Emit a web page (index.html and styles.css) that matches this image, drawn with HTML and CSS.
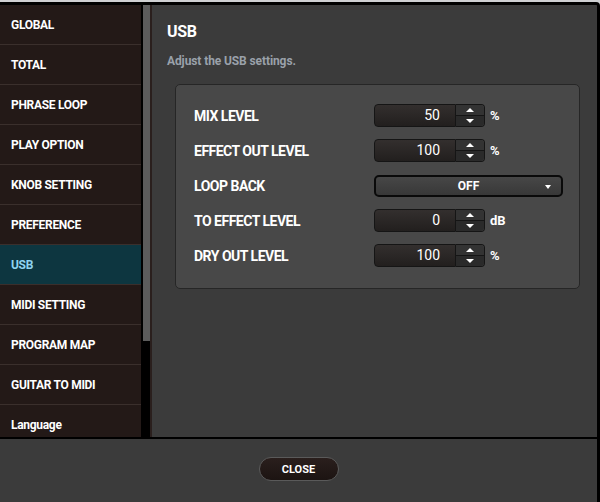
FILE: index.html
```html
<!DOCTYPE html>
<html lang="en">
<head>
  <meta charset="UTF-8">
  <title>USB settings</title>
  <link rel="stylesheet" href="styles.css">
</head>
<body>
  <div class="dialog">
    <div class="content">
      <ul class="menu">
        <li>GLOBAL</li>
        <li>TOTAL</li>
        <li>PHRASE LOOP</li>
        <li>PLAY OPTION</li>
        <li>KNOB SETTING</li>
        <li>PREFERENCE</li>
        <li class="active">USB</li>
        <li>MIDI SETTING</li>
        <li>PROGRAM MAP</li>
        <li>GUITAR TO MIDI</li>
        <li>Language</li>
      </ul>
      <div class="scrollbar"><div class="thumb"></div></div>
      <div class="main">
        <h2>USB</h2>
        <p class="desc">Adjust the USB settings.</p>
        <div class="box">
          <div class="row">
            <span class="label">MIX LEVEL</span>
            <div class="num"><span class="val">50</span><span class="spin"><i class="up"></i><i class="down"></i></span></div>
            <span class="unit">%</span>
          </div>
          <div class="row">
            <span class="label">EFFECT OUT LEVEL</span>
            <div class="num"><span class="val">100</span><span class="spin"><i class="up"></i><i class="down"></i></span></div>
            <span class="unit">%</span>
          </div>
          <div class="row">
            <span class="label">LOOP BACK</span>
            <div class="select">OFF<i class="caret"></i></div>
          </div>
          <div class="row">
            <span class="label">TO EFFECT LEVEL</span>
            <div class="num"><span class="val">0</span><span class="spin"><i class="up"></i><i class="down"></i></span></div>
            <span class="unit">dB</span>
          </div>
          <div class="row">
            <span class="label">DRY OUT LEVEL</span>
            <div class="num"><span class="val">100</span><span class="spin"><i class="up"></i><i class="down"></i></span></div>
            <span class="unit">%</span>
          </div>
        </div>
      </div>
    </div>
    <div class="footer">
      <button class="btn-close">CLOSE</button>
    </div>
  </div>
</body>
</html>
```
FILE: styles.css
```css
body{
  margin: 0;
  background: #cfd0d2;
  font-family: Roboto, "Liberation Sans", sans-serif;
  color: #fff;
}
.dialog{
  margin-top: 2px;
  height: 497px;
  border-top: 3px solid #000;
  border-right: 3px solid #000;
  border-top-right-radius: 4px;
  background: #3b3b3b;
  display: flex;
  flex-direction: column;
}
.content{
  display: flex;
  height: 432px;
  overflow: hidden;
}

.menu{
  width: 141px;
  margin: 0;
  padding: 0;
  list-style: none;
  background: #231917;
  flex-shrink: 0;
}
.menu > li{
  height: 39px;
  line-height: 41px;
  padding-left: 11px;
  border-bottom: 1px solid #3a2f2c;
  font-size: 12px;
  font-weight: 700;
  letter-spacing: -0.3px;
}
.menu > li.active{
  background: #0d3640;
  color: #8fd3ef;
}

.scrollbar{
  width: 11px;
  padding-left: 2px;
  box-sizing: border-box;
  background: #000;
  border-right: 2px solid #2a1f1d;
  flex-shrink: 0;
}
.scrollbar .thumb{
  height: 336px;
  background: #5c5c5c;
}

.main{
  flex: 1;
  padding: 0 17px 0 23px;
}
.main h2{
  margin: 17px 0 0 -8px;
  font-size: 16px;
  font-weight: 700;
  letter-spacing: -0.3px;
}
.main .desc{
  margin: 13px 0 0 -8px;
  font-size: 12px;
  font-weight: 700;
  color: #9aa1aa;
  letter-spacing: -0.1px;
}

.box{
  margin-top: 16px;
  padding: 13px 0 15px 18px;
  background: #484848;
  border: 1px solid #262626;
  border-radius: 5px;
}
.row{
  display: flex;
  align-items: center;
  height: 35px;
}
.row .label{
  width: 180px;
  font-size: 14px;
  font-weight: 700;
  letter-spacing: -0.5px;
}
.row .unit{
  margin-left: 5px;
  font-size: 13px;
  font-weight: 700;
}

.num{
  display: flex;
  height: 23px;
}
.num .val{
  width: 65px;
  padding-right: 15px;
  text-align: right;
  line-height: 21px;
  font-size: 14px;
  background: linear-gradient(#332f2e, #221f1e);
  border: 1px solid #151515;
  border-radius: 4px 0 0 4px;
}
.num .spin{
  width: 28px;
  display: flex;
  flex-direction: column;
  border: 1px solid #151515;
  border-left: none;
  border-radius: 0 4px 4px 0;
  overflow: hidden;
}
.num .spin i{
  flex: 1;
  display: flex;
  justify-content: center;
  align-items: center;
  background: #2a2a2a;
}
.num .spin i.up{
  background: #333;
  border-bottom: 1px solid #151515;
}
.num .spin i::after{
  content: '';
  border-left: 4px solid transparent;
  border-right: 4px solid transparent;
}
.num .spin i.up::after{
  border-bottom: 4px solid #fff;
}
.num .spin i.down::after{
  border-top: 4px solid #fff;
}

.select{
  position: relative;
  width: 185px;
  height: 18px;
  line-height: 18px;
  text-align: center;
  font-size: 12px;
  font-weight: 700;
  background: linear-gradient(#474747, #383838);
  border: 2px solid #0a0a0a;
  border-radius: 5px;
}
.select .caret{
  position: absolute;
  right: 10px;
  top: 8px;
  border-left: 3px solid transparent;
  border-right: 3px solid transparent;
  border-top: 4px solid #fff;
}

.footer{
  flex: 1;
  border-top: 2px solid #000;
  display: flex;
  justify-content: center;
  padding-top: 18px;
}
.btn-close{
  width: 80px;
  height: 24px;
  background: linear-gradient(#2a1f1d, #1c1412);
  border: 1px solid #5a5a5a;
  border-radius: 12px;
  color: #fff;
  font-family: Roboto, "Liberation Sans", sans-serif;
  font-size: 11px;
  font-weight: 700;
  cursor: pointer;
}
```
